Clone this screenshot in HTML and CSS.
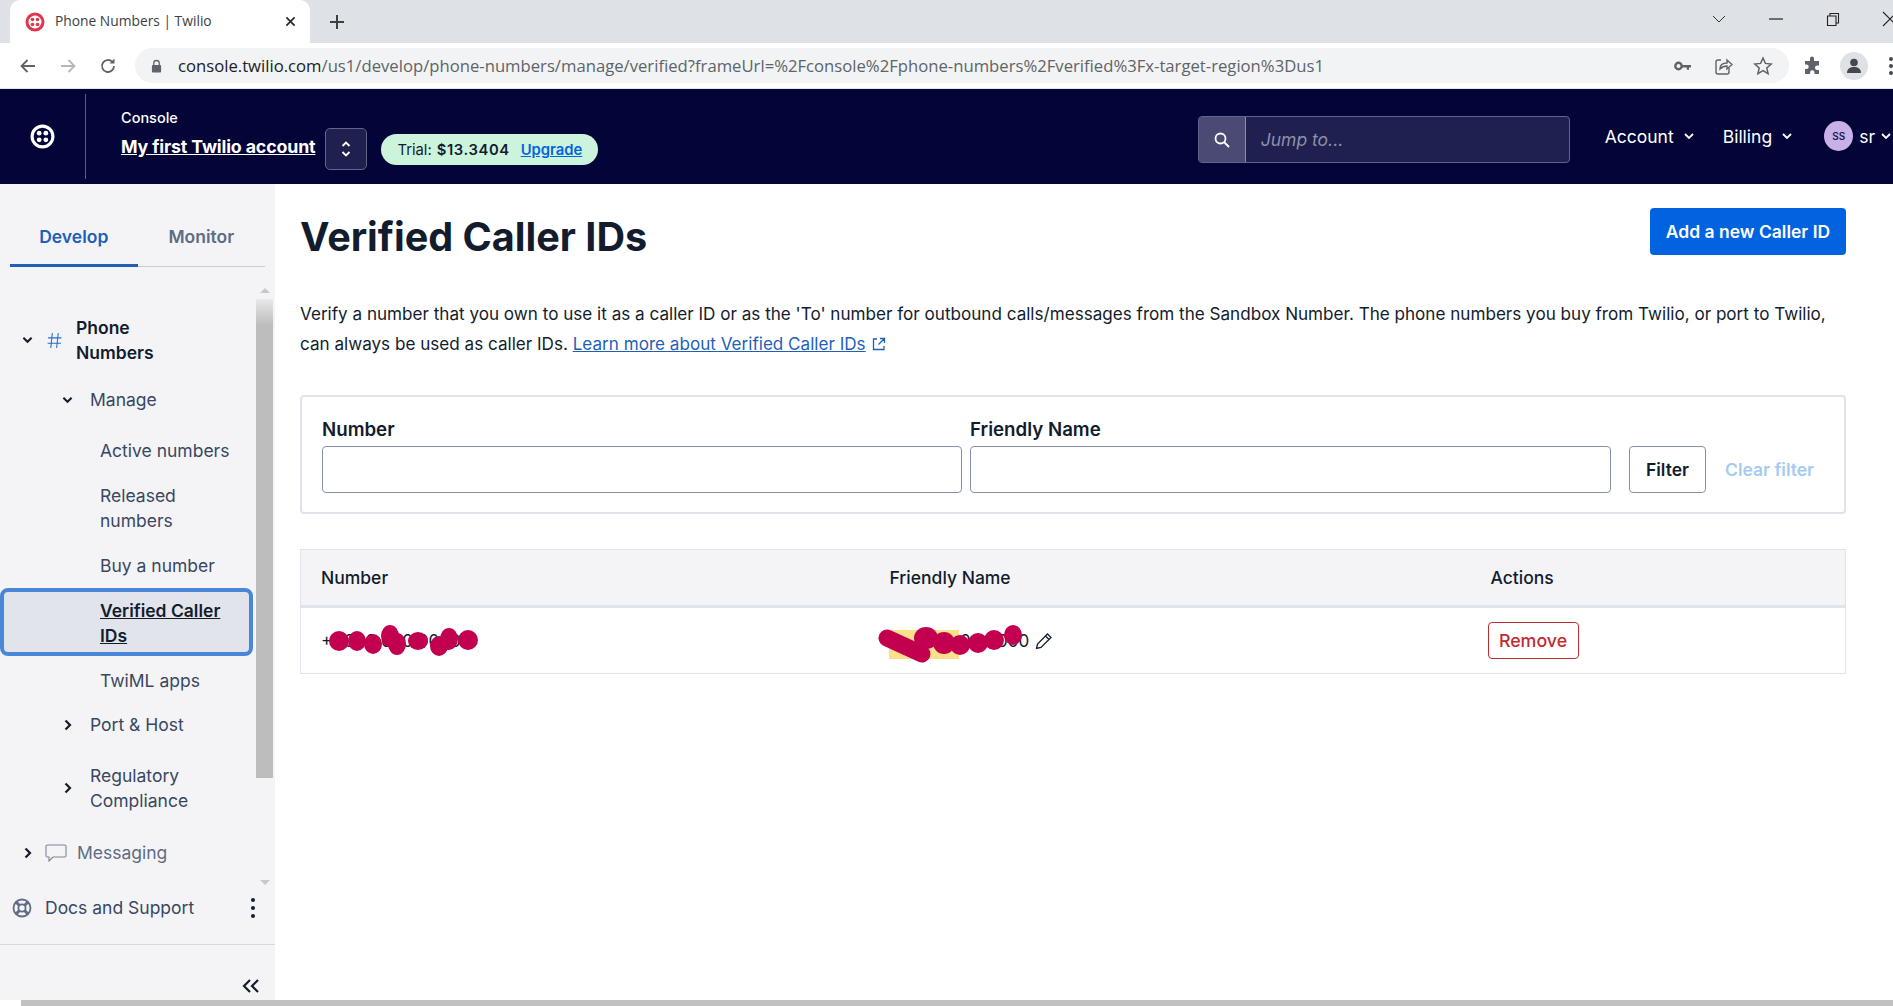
FILE: index.html
```html
<!DOCTYPE html>
<html lang="en">
<head>
    <meta charset="UTF-8">
    <title>Phone Numbers | Twilio</title>
    <link rel="stylesheet" href="styles.css">
</head>
<body>
    <div class="tab-strip">
        <div class="tab">
            <svg class="favicon" viewBox="0 0 20 20"><circle cx="10" cy="10" r="8" fill="none" stroke="#e0364c" stroke-width="3"/><circle cx="7.5" cy="7.5" r="1.8" fill="#e0364c"/><circle cx="12.5" cy="7.5" r="1.8" fill="#e0364c"/><circle cx="7.5" cy="12.5" r="1.8" fill="#e0364c"/><circle cx="12.5" cy="12.5" r="1.8" fill="#e0364c"/></svg>
            <span class="tab-title">Phone Numbers | Twilio</span>
            <svg class="tab-close" viewBox="0 0 12 12"><path d="M1.5 1.5l9 9M10.5 1.5l-9 9" stroke="#202124" stroke-width="1.7"/></svg>
        </div>
        <svg class="new-tab" viewBox="0 0 16 16"><path d="M8 1v14M1 8h14" stroke="#3c4043" stroke-width="2"/></svg>
        <div class="window-controls">
            <svg viewBox="0 0 16 16"><path d="M2 5l6 6 6-6" fill="none" stroke="#333" stroke-width="1"/></svg>
            <svg viewBox="0 0 16 16"><path d="M1 8h14" stroke="#222" stroke-width="1.2"/></svg>
            <svg viewBox="0 0 16 16"><path d="M2.5 5h8.5v9.5h-8.5zM5 5v-2.5h8.5v9.5h-2.5" fill="none" stroke="#222" stroke-width="1.1"/></svg>
            <svg viewBox="0 0 16 16"><path d="M1 1l14 14M15 1l-14 14" stroke="#222" stroke-width="1.1"/></svg>
        </div>
    </div>

    <div class="toolbar">
        <svg class="tool-icon" viewBox="0 0 18 18"><path d="M16 9H3M8.5 3L2.5 9l6 6" fill="none" stroke="#5f6368" stroke-width="1.8"/></svg>
        <svg class="tool-icon" viewBox="0 0 18 18"><path d="M2 9h13M9.5 3l6 6-6 6" fill="none" stroke="#b4b7bb" stroke-width="1.8"/></svg>
        <svg class="tool-icon" viewBox="0 0 18 18"><path d="M15 9a6 6 0 1 1-1.8-4.3" fill="none" stroke="#5f6368" stroke-width="1.8"/><path d="M15.5 1.5v5h-5z" fill="#5f6368"/></svg>
        <div class="omnibox">
            <svg class="lock" viewBox="0 0 12 14"><path d="M3 6V4a3 3 0 0 1 6 0v2" fill="none" stroke="#5f6368" stroke-width="1.4"/><rect x="1" y="6" width="10" height="8" rx="1" fill="#5f6368"/></svg>
            <span class="url">console.twilio.com<span class="url-rest">/us1/develop/phone-numbers/manage/verified?frameUrl=%2Fconsole%2Fphone-numbers%2Fverified%3Fx-target-region%3Dus1</span></span>
            <svg class="omni-icon" viewBox="0 0 20 20"><circle cx="5.5" cy="10" r="3.2" fill="none" stroke="#5f6368" stroke-width="2.4"/><path d="M8 9h10v2.4h-2v2.4h-2.2v-2.4H8z" fill="#5f6368"/></svg>
            <svg class="omni-icon" viewBox="0 0 20 20"><path d="M8 4H5a2 2 0 0 0-2 2v10a2 2 0 0 0 2 2h9a2 2 0 0 0 2-2v-4" fill="none" stroke="#5f6368" stroke-width="1.4"/><path d="M7 13c0-4 3-6 7-6V4l5 4.5-5 4.5v-3c-3 0-5 1-7 3z" fill="none" stroke="#5f6368" stroke-width="1.4"/></svg>
            <svg class="omni-icon" viewBox="0 0 20 20"><path d="M10 2l2.4 5.4 5.8.6-4.4 3.9 1.3 5.8L10 14.7l-5.1 3 1.3-5.8L1.800 8l5.800-.6z" fill="none" stroke="#5f6368" stroke-width="1.5"/></svg>
        </div>
        <svg class="puzzle" viewBox="0 0 20 20"><path d="M8 2.500a2 2 0 0 1 4 0V5h5v4.500h-1.800a2.200 2.200 0 0 0 0 4.400H17V18h-4.500v-1.500a2.200 2.200 0 0 0-4.400 0V18H3v-5h1.500a2.200 2.200 0 0 0 0-4.400H3V5h5z" fill="#5f6368"/></svg>
        <div class="chrome-avatar">
            <svg viewBox="0 0 20 20"><circle cx="10" cy="6.500" r="3.800" fill="#44474c"/><path d="M3 17c0-4 3-6 7-6s7 2 7 6z" fill="#44474c"/></svg>
        </div>
        <div class="kebab-dots"><i></i><i></i><i></i></div>
    </div>

    <header class="console-header">
        <div class="logo-cell">
            <svg viewBox="0 0 24 24" class="logo"><circle cx="12" cy="12" r="10" fill="none" stroke="#fff" stroke-width="3"/><circle cx="8.800" cy="8.800" r="2.300" fill="#fff"/><circle cx="15.200" cy="8.800" r="2.300" fill="#fff"/><circle cx="8.800" cy="15.200" r="2.300" fill="#fff"/><circle cx="15.200" cy="15.200" r="2.300" fill="#fff"/></svg>
        </div>
        <div class="account-name">
            <div class="console-label">Console</div>
            <a class="account-link">My first Twilio account</a>
        </div>
        <div class="account-switch">
            <svg viewBox="0 0 12 20"><path d="M2.500 7L6 3.500 9.500 7M2.500 13L6 16.500 9.500 13" fill="none" stroke="#fff" stroke-width="1.800"/></svg>
        </div>
        <div class="trial-pill">Trial: <b>$13.3404</b> <a>Upgrade</a></div>

        <div class="jump-search">
            <div class="jump-icon">
                <svg viewBox="0 0 18 18"><circle cx="7.500" cy="7.500" r="5" fill="none" stroke="#fff" stroke-width="1.800"/><path d="M11 11l5 5" stroke="#fff" stroke-width="1.800"/></svg>
            </div>
            <div class="jump-input">Jump to...</div>
        </div>
        <div class="top-menu">Account <svg class="chev-small" viewBox="0 0 10 6"><path d="M1 1l4 4 4-4" fill="none" stroke="#fff" stroke-width="1.800"/></svg></div>
        <div class="top-menu">Billing <svg class="chev-small" viewBox="0 0 10 6"><path d="M1 1l4 4 4-4" fill="none" stroke="#fff" stroke-width="1.800"/></svg></div>
        <div class="top-menu user-menu"><span class="user-badge">SS</span> sr <svg class="chev-small" viewBox="0 0 10 6"><path d="M1 1l4 4 4-4" fill="none" stroke="#fff" stroke-width="1.800"/></svg></div>
    </header>

    <div class="content">
        <aside class="sidebar">
            <div class="side-tabs">
                <div class="side-tab active">Develop</div>
                <div class="side-tab">Monitor</div>
            </div>

            <div class="scroll-area">
                <nav class="nav-list">
                    <div class="nav-row top bold phone-row">
                        <svg class="chev" viewBox="0 0 12 8"><path d="M1.500 1.500L6 6l4.500-4.500" fill="none" stroke="#121c2d" stroke-width="2.200"/></svg>
                        <svg class="hash" viewBox="0 0 14 16"><path d="M5 1L3.500 15M10.500 1L9 15M1 5.500h12.500M.5 10.500h12.500" fill="none" stroke="#1f6fd0" stroke-width="1"/></svg>
                        <span>Phone<br>Numbers</span>
                    </div>
                    <div class="nav-row second manage-row">
                        <svg class="chev" viewBox="0 0 12 8"><path d="M1.500 1.500L6 6l4.500-4.500" fill="none" stroke="#121c2d" stroke-width="2.200"/></svg>
                        <span>Manage</span>
                    </div>
                    <div class="nav-leaf gap-26">Active numbers</div>
                    <div class="nav-leaf gap-20">Released<br>numbers</div>
                    <div class="nav-leaf gap-20">Buy a number</div>
                    <div class="nav-leaf selected"><a>Verified Caller<br>IDs</a></div>
                    <div class="nav-leaf gap-12">TwiML apps</div>
                    <div class="nav-row second gap-19">
                        <svg class="chev side" viewBox="0 0 8 12"><path d="M1.500 1.500L6 6l-4.500 4.500" fill="none" stroke="#121c2d" stroke-width="2.200"/></svg>
                        <span>Port &amp; Host</span>
                    </div>
                    <div class="nav-row second gap-26">
                        <svg class="chev side" viewBox="0 0 8 12"><path d="M1.500 1.500L6 6l-4.500 4.500" fill="none" stroke="#121c2d" stroke-width="2.200"/></svg>
                        <span>Regulatory<br>Compliance</span>
                    </div>
                    <div class="nav-row top gap-27 muted">
                        <svg class="chev side" viewBox="0 0 8 12"><path d="M1.500 1.500L6 6l-4.500 4.500" fill="none" stroke="#121c2d" stroke-width="2.200"/></svg>
                        <svg class="chat" viewBox="0 0 22 18"><path d="M2.500 1h17a1.500 1.500 0 0 1 1.500 1.500v9a1.500 1.500 0 0 1-1.500 1.500H8l-4 4v-4H2.500A1.500 1.500 0 0 1 1 11.500v-9A1.500 1.500 0 0 1 2.500 1z" fill="none" stroke="#7b8496" stroke-width="1.100"/></svg>
                        <span>Messaging</span>
                    </div>
                </nav>
                <div class="side-scrollbar">
                    <div class="arrow-up"></div>
                    <div class="thumb"></div>
                    <div class="track"></div>
                    <div class="arrow-down"></div>
                </div>
            </div>

            <div class="docs-row">
                <svg class="buoy" viewBox="0 0 20 20"><circle cx="10" cy="10" r="8.500" fill="none" stroke="#606b85" stroke-width="1.800"/><circle cx="10" cy="10" r="3.600" fill="none" stroke="#606b85" stroke-width="1.800"/><path d="M4 4l3.500 3.500M16 4l-3.500 3.500M4 16l3.500-3.500M16 16l-3.500-3.500" stroke="#606b85" stroke-width="3"/></svg>
                <span>Docs and Support</span>
                <div class="docs-dots"><i></i><i></i><i></i></div>
            </div>
            <div class="collapse-row">
                <svg viewBox="0 0 20 16"><path d="M9 2L3 8l6 6M17 2l-6 6 6 6" fill="none" stroke="#121c2d" stroke-width="2.200"/></svg>
            </div>
        </aside>

        <main class="main">
            <div class="title-row">
                <h1>Verified Caller IDs</h1>
                <button class="btn-primary">Add a new Caller ID</button>
            </div>
            <p class="intro">Verify a number that you own to use it as a caller ID or as the 'To' number for outbound calls/messages from the Sandbox Number. The phone numbers you buy from Twilio, or port to Twilio, can always be used as caller IDs. <a>Learn more about Verified Caller IDs</a> <svg class="ext" viewBox="0 0 14 14"><path d="M5 2H1.500v10.500H12V9M8 1.500h4.500V6M12.500 1.500L6.500 7.500" fill="none" stroke="#1f5fb8" stroke-width="1.300"/></svg></p>

            <form class="filter-card">
                <div class="field">
                    <label>Number</label>
                    <input type="text">
                </div>
                <div class="field field-name">
                    <label>Friendly Name</label>
                    <input type="text">
                </div>
                <button type="button" class="btn-filter">Filter</button>
                <span class="clear-filter">Clear filter</span>
            </form>

            <table class="numbers">
                <thead>
                    <tr><th class="col-number">Number</th><th class="col-name">Friendly Name</th><th>Actions</th></tr>
                </thead>
                <tbody>
                    <tr>
                        <td>
                            <span class="scribbled">+1 000 000 0000
                                <svg class="scribble scribble-number" viewBox="0 0 170 40">
                                    <ellipse cx="18" cy="20" rx="10" ry="10"/><ellipse cx="36" cy="20" rx="9" ry="10"/><ellipse cx="52" cy="23" rx="9" ry="10"/><ellipse cx="69" cy="15" rx="9" ry="11"/><ellipse cx="76" cy="23" rx="9" ry="11"/><ellipse cx="97" cy="20" rx="10" ry="9"/><ellipse cx="118" cy="25" rx="9" ry="10"/><ellipse cx="128" cy="18" rx="9" ry="11"/><ellipse cx="147" cy="19" rx="10" ry="10"/>
                                </svg>
                            </span>
                        </td>
                        <td>
                            <span class="scribbled">+1 000 000 0000
                                <svg class="scribble scribble-name" viewBox="0 0 140 40">
                                    <rect x="7" y="9" width="70" height="29" fill="#fde08a"/>
                                    <path d="M5 17L40 33" fill="none" stroke="#c2004f" stroke-width="17" stroke-linecap="round"/>
                                    <ellipse cx="44" cy="17" rx="12" ry="11"/><ellipse cx="62" cy="22" rx="11" ry="11"/><ellipse cx="78" cy="24" rx="10" ry="10"/><ellipse cx="96" cy="22" rx="10" ry="10"/><ellipse cx="112" cy="19" rx="10" ry="10"/><ellipse cx="131" cy="14" rx="9" ry="10"/>
                                </svg>
                            </span>
                            <svg class="pencil" viewBox="0 0 18 18"><path d="M12.500 2l3.500 3.500L6 15.500l-4.500 1 1-4.500zM10.500 4l3.500 3.500" fill="none" stroke="#121c2d" stroke-width="1.300"/></svg>
                        </td>
                        <td><button class="btn-remove">Remove</button></td>
                    </tr>
                </tbody>
            </table>
        </main>
    </div>

    <div class="page-scrollbar"><div class="page-thumb"></div></div>
</body>
</html>
```

FILE: styles.css
```css
* {
    box-sizing: border-box;
}
html, body {
    height: 100%;
}
body {
    margin: 0;
    height: 1006px;
    overflow: hidden;
    display: flex;
    flex-direction: column;
    font-family: Inter, Arial, sans-serif;
    font-size: 17.5px;
    color: #121c2d;
    background: #fff;
}
svg {
    display: block;
    flex: none;
}

/* browser chrome */
.tab-strip {
    height: 43px;
    flex: none;
    display: flex;
    align-items: center;
    background: #dee1e6;
    overflow: hidden;
}
.tab {
    width: 300px;
    height: 43px;
    margin-left: 10px;
    padding: 0 14px 0 15px;
    display: flex;
    align-items: center;
    background: #fff;
    border-radius: 10px 10px 0 0;
}
.favicon {
    width: 20px;
    height: 20px;
}
.tab-title {
    margin: -2px 0 0 10px;
    flex: 1;
    font-family: "Open Sans", Arial, sans-serif;
    font-size: 13.8px;
    color: #3c4043;
}
.tab-close {
    width: 11px;
    height: 11px;
}
.new-tab {
    width: 16px;
    height: 16px;
    margin-left: 19px;
}
.window-controls {
    margin-left: auto;
    margin-right: -5px;
    margin-top: -6px;
    display: flex;
    align-items: center;
    gap: 41px;
}
.window-controls svg {
    width: 16px;
    height: 16px;
}
.toolbar {
    height: 46px;
    flex: none;
    display: flex;
    align-items: center;
    padding-left: 19px;
    background: #fff;
    border-bottom: 1px solid #e3e5e8;
}
.tool-icon {
    width: 18px;
    height: 18px;
    margin-right: 22px;
}
.omnibox {
    width: 1655px;
    height: 35px;
    margin-left: -4px;
    padding: 0 16px;
    display: flex;
    align-items: center;
    background: #f1f3f4;
    border-radius: 18px;
}
.lock {
    width: 11px;
    height: 14px;
}
.url {
    margin-left: 16px;
    flex: 1;
    white-space: nowrap;
    font-family: "Open Sans", Arial, sans-serif;
    font-size: 16.68px;
    color: #202124;
}
.url-rest {
    color: #5f6368;
}
.omni-icon {
    width: 20px;
    height: 20px;
    margin-left: 20px;
}
.puzzle {
    width: 20px;
    height: 20px;
    margin-left: 13px;
}
.chrome-avatar {
    width: 28px;
    height: 28px;
    margin-left: 18px;
    padding: 4px;
    border-radius: 50%;
    background: #dee1e6;
}
.kebab-dots {
    margin-left: 21px;
    display: flex;
    flex-direction: column;
    gap: 3px;
}
.kebab-dots i {
    width: 4px;
    height: 4px;
    border-radius: 50%;
    background: #44474c;
}

/* console header */
.console-header {
    height: 95px;
    flex: none;
    display: flex;
    align-items: center;
    background: #030539;
    color: #fff;
}
.logo-cell {
    width: 86px;
    height: 85px;
    display: flex;
    align-items: center;
    justify-content: center;
    border-right: 1px solid #5a5d80;
}
.logo {
    width: 25px;
    height: 25px;
}
.account-name {
    margin-left: 35px;
    margin-top: -7px;
}
.console-label {
    font-size: 14.5px;
    font-weight: 500;
    margin-bottom: 10px;
}
.account-link {
    font-size: 17.8px;
    font-weight: 700;
    text-decoration: underline;
    letter-spacing: -0.15px;
}
.account-switch {
    width: 42px;
    height: 42px;
    margin: 25px 0 0 10px;
    display: flex;
    align-items: center;
    justify-content: center;
    background: #1f1f50;
    border: 1px solid #62648a;
    border-radius: 5px;
}
.account-switch svg {
    width: 12px;
    height: 20px;
}
.trial-pill {
    height: 31px;
    margin: 26px 0 0 14px;
    padding: 0 16px;
    display: flex;
    align-items: center;
    gap: 5px;
    font-size: 14.8px;
    color: #121c2d;
    background: #ccf4dd;
    border-radius: 16px;
}
.trial-pill b {
    font-weight: 600;
    letter-spacing: 0.6px;
}
.trial-pill a {
    margin-left: 6px;
    font-weight: 600;
    color: #0263e0;
    text-decoration: underline;
}
.jump-search {
    width: 372px;
    height: 47px;
    margin-left: auto;
    margin-top: 6px;
    display: flex;
    background: #1f1f50;
    border: 1px solid #62648a;
    border-radius: 4px;
}
.jump-icon {
    width: 47px;
    display: flex;
    align-items: center;
    justify-content: center;
    background: #4a4a75;
    border-right: 1px solid #8c8ea8;
}
.jump-icon svg {
    width: 18px;
    height: 18px;
}
.jump-input {
    padding-left: 15px;
    line-height: 45px;
    font-style: italic;
    color: #8e90a8;
}
.top-menu {
    display: flex;
    align-items: center;
    gap: 10px;
    margin: -1px 0 0 29px;
    font-weight: 400;
}
.jump-search + .top-menu {
    margin-left: 35px;
}
.chev-small {
    width: 10px;
    height: 6px;
}
.user-menu {
    margin-left: 32px;
    margin-right: 2px;
    gap: 6px;
}
.user-badge {
    width: 29px;
    height: 30px;
    line-height: 30px;
    text-align: center;
    font-size: 10px;
    font-weight: 600;
    color: #1c1c4a;
    background: #c9b0e8;
    border-radius: 50%;
}

/* sidebar */
.content {
    flex: 1;
    min-height: 0;
    display: flex;
}
.sidebar {
    width: 275px;
    flex: none;
    display: flex;
    flex-direction: column;
    background: #f4f4f6;
    color: #394762;
}
.side-tabs {
    height: 83px;
    flex: none;
    margin: 0 10px;
    display: flex;
    border-bottom: 1px solid #c8ccd6;
}
.side-tab {
    width: 128px;
    padding-top: 42px;
    text-align: center;
    font-weight: 600;
    color: #606b85;
}
.side-tab.active {
    color: #1f5fb8;
    border-bottom: 3px solid #1f5fb8;
    height: 83px;
}
.scroll-area {
    height: 608px;
    flex: none;
    display: flex;
}
.nav-list {
    width: 256px;
    padding-top: 48px;
    line-height: 25px;
}
.nav-row {
    display: flex;
    align-items: center;
}
.nav-row.top {
    padding-left: 22px;
}
.nav-row.second {
    padding-left: 62px;
}
.bold {
    font-weight: 600;
    color: #121c2d;
}
.chev {
    width: 11px;
    height: 8px;
    margin-right: 17px;
}
.chev.side {
    width: 8px;
    height: 12px;
    margin: 0 18px 0 2px;
}
.hash {
    width: 15px;
    height: 17px;
    margin: 0 14px 0 -3px;
}
.chat {
    width: 22px;
    height: 18px;
    margin: 0 10px 0 -5px;
}
.muted {
    color: #606b85;
}
.manage-row {
    margin-top: 22px;
}
.nav-leaf {
    padding-left: 100px;
}
.gap-12 {
    margin-top: 12px;
}
.gap-19 {
    margin-top: 19px;
}
.gap-20 {
    margin-top: 20px;
}
.gap-26 {
    margin-top: 26px;
}
.gap-27 {
    margin-top: 27px;
}
.nav-leaf.selected {
    width: 253px;
    height: 68px;
    margin-top: 10px;
    padding-top: 6px;
    padding-left: 96px;
    background: #e1e4ea;
    border: 4px solid #4a86d8;
    border-radius: 8px;
    font-weight: 600;
    color: #121c2d;
}
.selected a {
    text-decoration: underline;
}
.side-scrollbar {
    width: 17px;
    display: flex;
    flex-direction: column;
    align-items: center;
}
.arrow-up {
    margin-top: 21px;
    border: 5px solid transparent;
    border-top: 0;
    border-bottom: 5px solid #c8c8c8;
    height: 5px;
}
.thumb {
    width: 17px;
    height: 479px;
    margin-top: 6px;
    flex: none;
    background: linear-gradient(#e8e8ea, #bdbdbd 26px);
}
.track {
    flex: 1;
}
.arrow-down {
    margin-bottom: -10px;
    border: 5px solid transparent;
    border-bottom: 0;
    border-top: 5px solid #c8c8c8;
    height: 5px;
}
.docs-row {
    height: 70px;
    flex: none;
    padding: 0 20px 4px 12px;
    display: flex;
    align-items: center;
    border-bottom: 1px solid #d5d8e0;
}
.docs-row span {
    margin-left: 13px;
    flex: 1;
}
.buoy {
    width: 20px;
    height: 20px;
}
.docs-dots {
    display: flex;
    flex-direction: column;
    gap: 4px;
}
.docs-dots i {
    width: 4px;
    height: 4px;
    border-radius: 50%;
    background: #121c2d;
}
.collapse-row {
    flex: 1;
    padding: 33px 14px 0 0;
    display: flex;
    justify-content: flex-end;
}
.collapse-row svg {
    width: 20px;
    height: 16px;
}

/* main */
.main {
    flex: 1;
    padding: 0 48px 0 25px;
}
.title-row {
    height: 103px;
    display: flex;
    justify-content: space-between;
    align-items: flex-start;
}
h1 {
    margin: 28px 0 0;
    font-size: 39.6px;
    line-height: 50px;
    font-weight: 700;
}
.btn-primary {
    width: 196px;
    height: 47px;
    margin-top: 24px;
    padding: 0;
    font-family: inherit;
    font-size: 17.5px;
    font-weight: 600;
    color: #fff;
    background: #0263e0;
    border: none;
    border-radius: 4px;
}
.intro {
    margin: 12px 0 0;
    font-size: 17.1px;
    line-height: 30px;
}
.intro a {
    color: #1f5fb8;
    text-decoration: underline;
}
.ext {
    display: inline-block;
    width: 14px;
    height: 14px;
    margin-left: 2px;
    vertical-align: -1px;
}
.filter-card {
    height: 119px;
    margin-top: 36px;
    padding: 0 30px 19px 20px;
    display: flex;
    align-items: flex-end;
    border: 2px solid #e1e3ea;
    border-radius: 4px;
}
.field {
    width: 640px;
    margin-right: 8px;
}
.field-name {
    width: 641px;
}
.field label {
    display: block;
    margin-bottom: 5px;
    font-size: 18.7px;
    font-weight: 600;
}
.field input {
    display: block;
    width: 100%;
    height: 47px;
    border: 1px solid #8891aa;
    border-radius: 4px;
    background: #fff;
}
.btn-filter {
    width: 77px;
    height: 47px;
    margin-left: 10px;
    flex: none;
    padding: 0;
    font-family: inherit;
    font-size: 17.5px;
    font-weight: 600;
    color: #121c2d;
    background: #fff;
    border: 1px solid #8891aa;
    border-radius: 4px;
}
.clear-filter {
    margin-left: 19px;
    line-height: 47px;
    white-space: nowrap;
    font-weight: 600;
    color: #a5cbf3;
}
.numbers {
    width: 100%;
    margin-top: 35px;
    table-layout: fixed;
    border-collapse: collapse;
    border: 1px solid #e1e3ea;
}
.numbers th {
    height: 57px;
    padding: 0 0 0 20px;
    text-align: left;
    font-weight: 500;
    background: #f4f4f6;
    border-bottom: 3px solid #e1e3ea;
}
.numbers .col-number {
    width: 569px;
}
.numbers .col-name {
    width: 601px;
}
.numbers td {
    height: 65px;
    padding: 0 0 0 20px;
}
.numbers td:nth-child(2) {
    display: flex;
    align-items: center;
}
.scribbled {
    position: relative;
    display: inline-block;
    white-space: nowrap;
    font-size: 17px;
}
.scribble {
    position: absolute;
    top: 50%;
    height: 40px;
    margin-top: -20px;
    overflow: visible;
    fill: #c2004f;
}
.scribble-number {
    left: 0;
    width: 170px;
}
.scribble-name {
    left: -8px;
    width: 140px;
}
.pencil {
    width: 18px;
    height: 18px;
    margin-left: 6px;
}
.btn-remove {
    width: 91px;
    height: 37px;
    margin-left: -3px;
    padding: 0;
    font-family: inherit;
    font-size: 17.8px;
    font-weight: 500;
    color: #bf2b30;
    background: #fff;
    border: 1px solid #bf2b30;
    border-radius: 4px;
}

.page-scrollbar {
    height: 6px;
    flex: none;
    padding-left: 21px;
    background: #fff;
}
.page-thumb {
    height: 6px;
    background: #c1c1c1;
}
```
